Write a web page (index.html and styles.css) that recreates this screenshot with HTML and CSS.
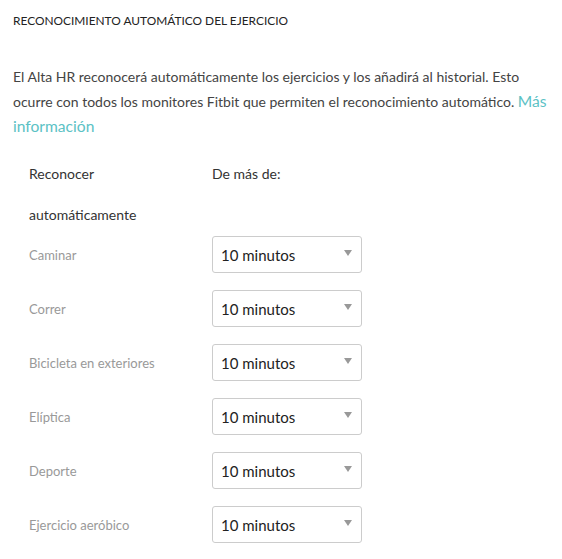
FILE: index.html
```html
<!DOCTYPE html>
<html lang="es">
<head>
<meta charset="utf-8">
<link rel="stylesheet" href="styles.css">
</head>
<body>
<section class="panel">
  <h2 class="title">RECONOCIMIENTO AUTOMÁTICO DEL EJERCICIO</h2>
  <p class="desc">El Alta HR reconocerá automáticamente los ejercicios y los añadirá al historial. Esto ocurre con todos los monitores Fitbit que permiten el reconocimiento automático. <a class="link" href="#">Más información</a></p>
  <div class="grid">
    <div class="head head-wrap">Reconocer automáticamente</div>
    <div class="head">De más de:</div>

    <div class="label">Caminar</div>
    <div class="select"><span>10 minutos</span><i class="arrow"></i></div>

    <div class="label">Correr</div>
    <div class="select"><span>10 minutos</span><i class="arrow"></i></div>

    <div class="label">Bicicleta en exteriores</div>
    <div class="select"><span>10 minutos</span><i class="arrow"></i></div>

    <div class="label">Elíptica</div>
    <div class="select"><span>10 minutos</span><i class="arrow"></i></div>

    <div class="label">Deporte</div>
    <div class="select"><span>10 minutos</span><i class="arrow"></i></div>

    <div class="label">Ejercicio aeróbico</div>
    <div class="select"><span>10 minutos</span><i class="arrow"></i></div>
  </div>
</section>
</body>
</html>
```

FILE: styles.css
```css
html, body {
  margin: 0;
  padding: 0;
  background: #fff;
}
body {
  font-family: Lato, "Liberation Sans", sans-serif;
  color: #333;
}
.panel {
  padding: 13px 13px 0 13px;
}
.title {
  margin: 0;
  font-size: 11.9px;
  font-weight: 400;
  line-height: 16px;
  color: #222;
}
.desc {
  margin: 35px 0 0 0;
  font-size: 14px;
  line-height: 25px;
  color: #444;
}
.link {
  font-size: 15.6px;
  color: #5cc2c5;
  text-decoration: none;
}
.grid {
  display: grid;
  grid-template-columns: 183px 150px;
  margin: 14px 0 0 16px;
  row-gap: 17px;
  align-items: center;
}
.head {
  font-size: 14px;
  line-height: 41px;
  color: #333;
  align-self: start;
  margin-bottom: -16px;
}
.head-wrap {
  width: 120px;
}
.label {
  font-size: 13px;
  color: #999;
}
.select {
  height: 37px;
  box-sizing: border-box;
  border: 1px solid #ccc;
  border-radius: 3px;
  display: flex;
  align-items: center;
  justify-content: space-between;
  padding: 0 9px 0 8px;
  font-size: 15px;
  color: #222;
}
.arrow {
  width: 0;
  height: 0;
  border-left: 4px solid transparent;
  border-right: 4px solid transparent;
  border-top: 6px solid #999;
  margin-top: -3px;
}
```
